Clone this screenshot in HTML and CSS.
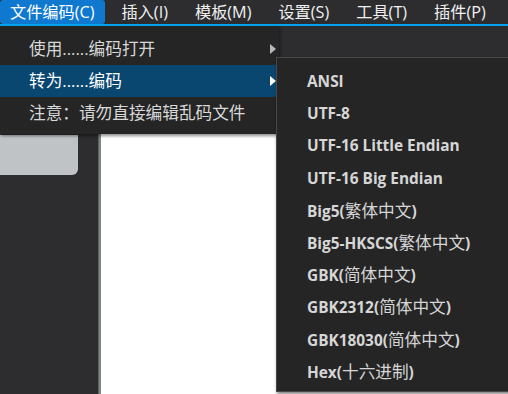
FILE: index.html
```html
<!DOCTYPE html>
<html lang="zh-CN">
<head>
<meta charset="utf-8">
<title>文件编码</title>
<link rel="stylesheet" href="styles.css">
</head>
<body>
<div class="app">
  <nav class="menubar">
    <div class="mb-item active">文件编码(C)</div>
    <div class="mb-item">插入(I)</div>
    <div class="mb-item">模板(M)</div>
    <div class="mb-item">设置(S)</div>
    <div class="mb-item">工具(T)</div>
    <div class="mb-item">插件(P)</div>
  </nav>
  <main class="workspace">
    <aside class="sidebar">
      <div class="side-spacer"></div>
      <div class="side-card"></div>
    </aside>
    <div class="splitter"></div>
    <section class="editor">
      <div class="editor-tabs"></div>
      <div class="editor-page"></div>
    </section>
  </main>

  <div class="menu">
    <div class="menu-row">使用......编码打开<span class="arrow"></span></div>
    <div class="menu-row hot">转为......编码<span class="arrow"></span></div>
    <div class="menu-row">注意：请勿直接编辑乱码文件</div>
  </div>

  <div class="submenu">
    <div class="sub-row">ANSI</div>
    <div class="sub-row">UTF-8</div>
    <div class="sub-row">UTF-16 Little Endian</div>
    <div class="sub-row">UTF-16 Big Endian</div>
    <div class="sub-row">Big5(<span class="cjk">繁体中文</span>)</div>
    <div class="sub-row">Big5-HKSCS(<span class="cjk">繁体中文</span>)</div>
    <div class="sub-row">GBK(<span class="cjk">简体中文</span>)</div>
    <div class="sub-row">GBK2312(<span class="cjk">简体中文</span>)</div>
    <div class="sub-row">GBK18030(<span class="cjk">简体中文</span>)</div>
    <div class="sub-row">Hex(<span class="cjk">十六进制</span>)</div>
  </div>
</div>
</body>
</html>
```
FILE: styles.css
```css
* { box-sizing: border-box; }
html, body {
  margin: 0;
  padding: 0;
  width: 508px;
  height: 394px;
  overflow: hidden;
  background: #2d2d30;
  font-family: "Open Sans", "Noto Sans CJK SC", sans-serif;
}
.app {
  position: relative;
  width: 508px;
  height: 394px;
  display: flex;
  flex-direction: column;
}
.menubar {
  height: 26px;
  display: flex;
  gap: 7px;
  background: #2d2d30;
  border-bottom: 2px solid #00a2ed;
  flex: none;
}
.mb-item {
  height: 24px;
  padding: 0 10px;
  font-size: 16.2px;
  line-height: 24px;
  color: #f0f0f0;
  white-space: nowrap;
}
.mb-item.active {
  background: #0f78cf;
  border-radius: 3px;
  color: #ffffff;
}
.workspace {
  flex: 1;
  display: flex;
  min-height: 0;
}
.sidebar {
  width: 98px;
  background: #2d2d30;
  display: flex;
  flex-direction: column;
}
.side-spacer { height: 109px; }
.side-card {
  width: 78px;
  height: 40px;
  background: #bfc3c6;
  border-bottom-right-radius: 6px;
}
.splitter {
  width: 3px;
  background: #7f8585;
  border-left: 1px solid #5d6262;
}
.editor {
  flex: 1;
  display: flex;
  flex-direction: column;
}
.editor-tabs {
  height: 40px;
  background: #2d2d30;
}
.editor-page {
  flex: 1;
  background: #ffffff;
}

.menu {
  position: absolute;
  left: 0;
  top: 26px;
  width: 279px;
  padding: 7px 0 5px;
  background: #252526;
  box-shadow: 1px 2px 3px rgba(0,0,0,0.45);
}
.menu-row {
  position: relative;
  height: 32px;
  line-height: 32px;
  padding-left: 29px;
  font-size: 16.67px;
  color: #d8d8d8;
  white-space: nowrap;
}
.menu-row.hot {
  background: #094771;
  color: #ffffff;
}
.arrow {
  position: absolute;
  left: 270px;
  top: 11px;
  width: 0;
  height: 0;
  border-top: 5px solid transparent;
  border-bottom: 5px solid transparent;
  border-left: 6px solid #b8b8b8;
}
.hot .arrow { border-left-color: #ffffff; }

.submenu {
  position: absolute;
  left: 276px;
  top: 57px;
  width: 234px;
  height: 335px;
  padding-top: 8px;
  background: #252526;
  border: 1px solid #48484c;
  box-shadow: 1px 2px 3px rgba(0,0,0,0.5);
}
.sub-row {
  height: 32.2px;
  line-height: 32px;
  padding-left: 30px;
  font-size: 15.4px;
  font-weight: 700;
  color: #d6d6d6;
  white-space: nowrap;
}
.cjk {
  font-weight: 400;
  font-size: 16.67px;
}
```
